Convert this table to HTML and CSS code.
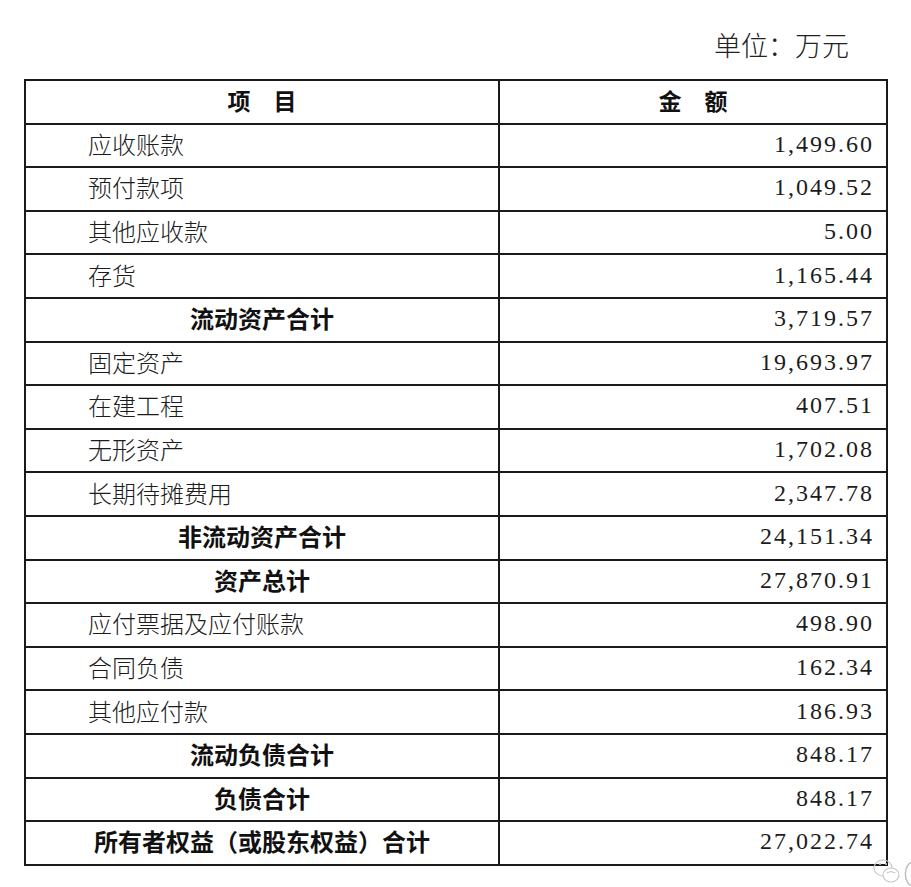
FILE: index.html
```html
<!DOCTYPE html>
<html lang="zh-CN">
<head>
<meta charset="utf-8">
<title>资产负债表</title>
<link rel="stylesheet" href="styles.css">
</head>
<body>
<div class="page">
  <div class="unit">单位：万元</div>
  <table class="sheet">
    <colgroup><col class="c1"><col class="c2"></colgroup>
    <thead>
      <tr><th>项　目</th><th>金　额</th></tr>
    </thead>
    <tbody>
      <tr><td class="lbl">应收账款</td><td class="num">1,499.60</td></tr>
      <tr><td class="lbl">预付款项</td><td class="num">1,049.52</td></tr>
      <tr><td class="lbl">其他应收款</td><td class="num">5.00</td></tr>
      <tr><td class="lbl">存货</td><td class="num">1,165.44</td></tr>
      <tr><td class="sum">流动资产合计</td><td class="num">3,719.57</td></tr>
      <tr><td class="lbl">固定资产</td><td class="num">19,693.97</td></tr>
      <tr><td class="lbl">在建工程</td><td class="num">407.51</td></tr>
      <tr><td class="lbl">无形资产</td><td class="num">1,702.08</td></tr>
      <tr><td class="lbl">长期待摊费用</td><td class="num">2,347.78</td></tr>
      <tr><td class="sum">非流动资产合计</td><td class="num">24,151.34</td></tr>
      <tr><td class="sum">资产总计</td><td class="num">27,870.91</td></tr>
      <tr><td class="lbl">应付票据及应付账款</td><td class="num">498.90</td></tr>
      <tr><td class="lbl">合同负债</td><td class="num">162.34</td></tr>
      <tr><td class="lbl">其他应付款</td><td class="num">186.93</td></tr>
      <tr><td class="sum">流动负债合计</td><td class="num">848.17</td></tr>
      <tr><td class="sum">负债合计</td><td class="num">848.17</td></tr>
      <tr><td class="sum">所有者权益（或股东权益）合计</td><td class="num">27,022.74</td></tr>
    </tbody>
  </table>
  <svg class="mark" width="44" height="34" viewBox="0 0 44 34" aria-hidden="true">
    <ellipse cx="12" cy="15" rx="9" ry="8" fill="none" stroke="#c4c4c4" stroke-width="1.1"/>
    <ellipse cx="20" cy="22" rx="8" ry="7" fill="#fff" stroke="#c4c4c4" stroke-width="1.1"/>
    <circle cx="9" cy="11" r="1.1" fill="#c4c4c4"/>
    <circle cx="15" cy="11" r="1.1" fill="#c4c4c4"/>
    <path d="M15.5 20 q4.5 -3 9 0" fill="none" stroke="#c4c4c4" stroke-width="1"/>
    <path d="M42 9 a7 11 0 0 0 0 24" fill="none" stroke="#bbb" stroke-width="1.4"/>
  </svg>
</div>
</body>
</html>
```

FILE: styles.css
```css
html, body {
  margin: 0;
  padding: 0;
  background: #fff;
}

.page {
  position: relative;
  width: 911px;
  height: 887px;
  overflow: hidden;
  color: #111;
  font-family: "Noto Sans CJK SC", "Liberation Sans", sans-serif;
}

.unit {
  height: 79px;
  box-sizing: border-box;
  padding: 28px 62px 0 0;
  text-align: right;
  font-size: 27px;
  font-weight: 300;
  line-height: 34px;
  color: #222;
}

.sheet {
  margin-left: 24px;
  width: 862px;
  border-collapse: collapse;
  table-layout: fixed;
}

.sheet col.c1 { width: 474px; }
.sheet col.c2 { width: 388px; }

.sheet tr {
  height: 43.6px;
}

.sheet th,
.sheet td {
  border: 2px solid #1a1a1a;
  padding: 0 0 3px 0;
  vertical-align: middle;
  line-height: 1;
}

.sheet th {
  font-weight: 700;
  font-size: 23px;
  text-align: center;
}

.sheet td.lbl {
  padding-left: 62px;
  font-size: 24px;
  font-weight: 300;
  color: #1c1c1c;
  text-align: left;
}

.sheet td.sum {
  font-weight: 700;
  font-size: 24px;
  text-align: center;
}

.sheet td.num {
  padding-right: 12px;
  text-align: right;
  font-family: "Liberation Serif", serif;
  font-size: 24px;
  letter-spacing: 2px;
  color: #1c1c1c;
}

.mark {
  position: absolute;
  right: -4px;
  bottom: 0;
}
```
